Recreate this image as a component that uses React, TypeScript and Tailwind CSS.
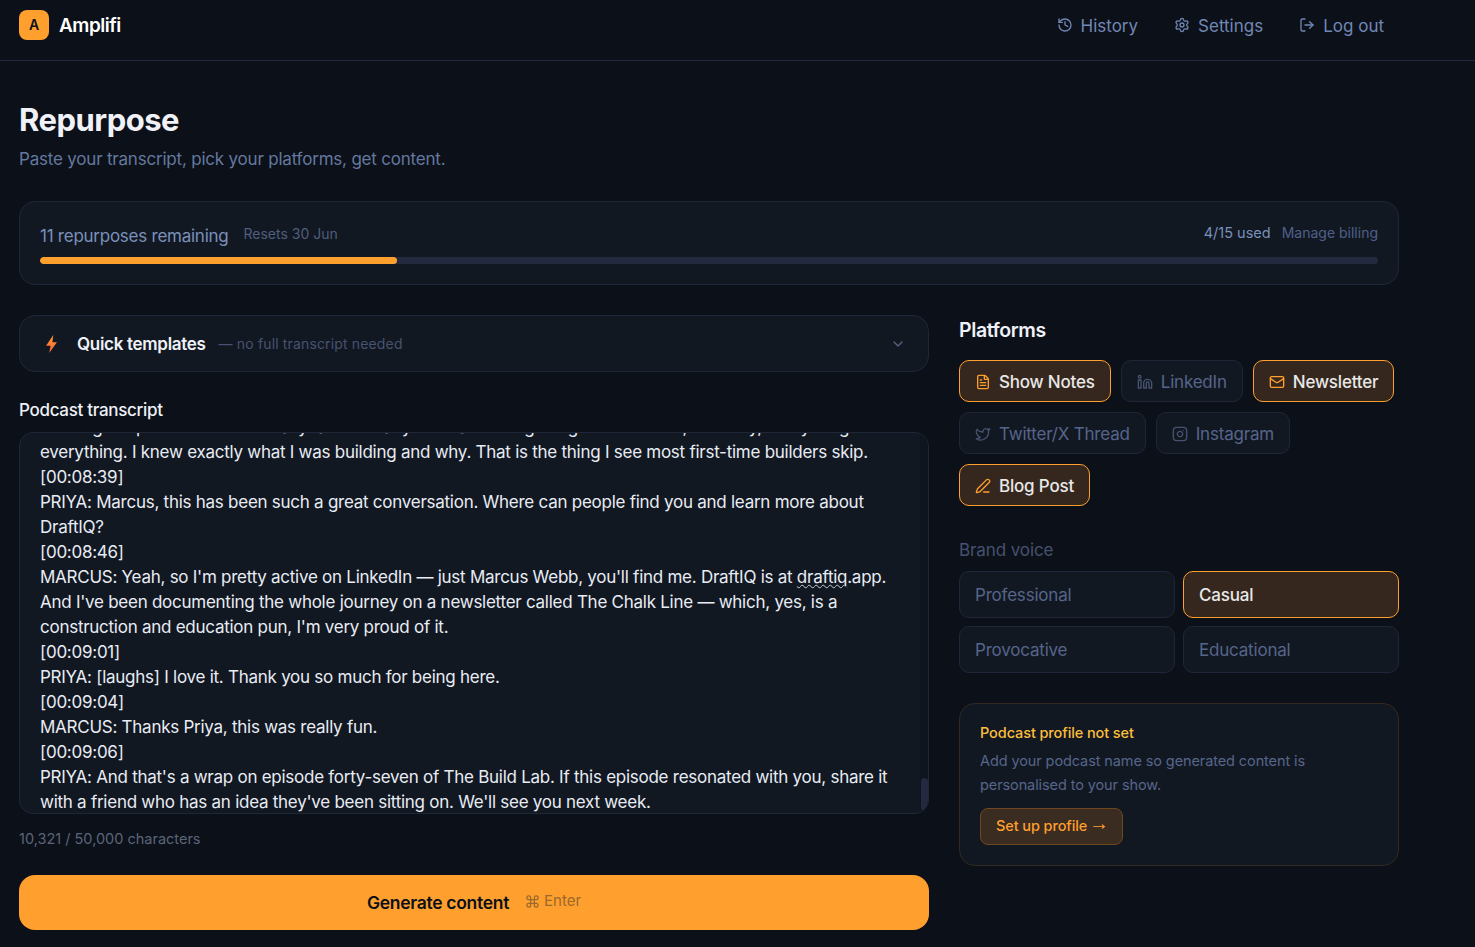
import { ChevronDown, Command, FileText, History, Instagram, Linkedin, LogOut, Mail, PenLine, Settings, Twitter } from "lucide-react";

const platforms = [
  { label: "Show Notes", icon: FileText, on: true },
  { label: "LinkedIn", icon: Linkedin, on: false },
  { label: "Newsletter", icon: Mail, on: true },
  { label: "Twitter/X Thread", icon: Twitter, on: false },
  { label: "Instagram", icon: Instagram, on: false },
  { label: "Blog Post", icon: PenLine, on: true },
];

const voices = [
  { label: "Professional", on: false },
  { label: "Casual", on: true },
  { label: "Provocative", on: false },
  { label: "Educational", on: false },
];

const App = () => {
  return (
    <div className="min-h-screen bg-[#0c1018] font-['Inter',sans-serif] text-[#e8ecf4] overflow-hidden h-[947px]">
      {/* Top bar */}
      <header className="h-[61px] border-b border-[#232a40] flex items-center justify-between pl-[19px] pr-[91px] pb-[10px]">
        <div className="flex items-center gap-[10px]">
          <div className="w-[30px] h-[30px] rounded-lg bg-[#ff9f2e] flex items-center justify-center text-[#0c1018] text-sm font-semibold">A</div>
          <span className="text-[19px] pt-[2px] font-semibold tracking-[-0.5px] text-white">Amplifi</span>
        </div>
        <nav className="flex items-center gap-9 text-[17px] text-[#7187b5] pt-[4px]">
          <a className="flex items-center gap-2"><History className="w-4 h-4 -mt-[5px]" />History</a>
          <a className="flex items-center gap-2"><Settings className="w-4 h-4 -mt-[5px]" />Settings</a>
          <a className="flex items-center gap-2"><LogOut className="w-4 h-4 -mt-[5px]" />Log out</a>
        </nav>
      </header>

      <main className="w-[1380px] ml-[19px] pt-[40px]">
        <h1 className="text-[31px] leading-[38px] font-bold tracking-[-0.5px] text-[#f0f2f8]">Repurpose</h1>
        <p className="text-[17px] leading-6 mt-[8px] tracking-[-0.2px] text-[#64789f]">Paste your transcript, pick your platforms, get content.</p>

        {/* Usage */}
        <section className="mt-[30px] h-[84px] rounded-2xl border border-[#1f2638] bg-[#121822] px-5 pt-5">
          <div className="flex items-center justify-between h-[24px]">
            <div className="flex items-center gap-[15px]">
              <span className="text-[17px] tracking-[-0.25px] text-[#7a90bb] pt-[5px]">11 repurposes remaining</span>
              <span className="text-[14px] text-[#4f5d7c] -mt-[2px]">Resets 30 Jun</span>
            </div>
            <div className="flex items-baseline gap-[11px] -mt-[2px]">
              <span className="text-[14.5px] text-[#7a90bb]">4/15 used</span>
              <span className="text-[14px] text-[#4f6088]">Manage billing</span>
            </div>
          </div>
          <div className="mt-[11px] h-[7px] rounded-full bg-[#232a40] overflow-hidden">
            <div className="h-full w-[26.7%] rounded-full bg-[#ff9f2e]" />
          </div>
        </section>

        <div className="mt-[30px] flex gap-[30px]">
          {/* Left column */}
          <div className="w-[910px]">
            <div className="h-[57px] rounded-2xl border border-[#1f2638] bg-[#121822] flex items-center pl-[26px] pr-[22px]">
              <svg viewBox="0 0 12 20" className="w-[11px] h-[18px]">
                <defs>
                  <linearGradient id="bolt" x1="0" y1="0" x2="0" y2="1">
                    <stop offset="0" stopColor="#ff9f2e" />
                    <stop offset="1" stopColor="#ff5f3a" />
                  </linearGradient>
                </defs>
                <path d="M8 0 0 12h5l-1.5 8L12 8H7z" fill="url(#bolt)" />
              </svg>
              <span className="ml-[20px] pt-[2px] text-[17px] font-semibold tracking-[-0.3px] text-[#eef1f7]">Quick templates</span>
              <span className="ml-[13px] text-[14px] tracking-[0.15px] text-[#46526f]">— no full transcript needed</span>
              <ChevronDown className="ml-auto w-4 h-4 text-[#56627f]" />
            </div>

            <label className="block mt-[28px] text-[17px] leading-5 font-medium tracking-[-0.3px] text-[#eef1f7]">Podcast transcript</label>

            <div className="relative mt-[12px] h-[382px] rounded-[14px] border border-[#1f2638] bg-[#121822] overflow-hidden flex flex-col justify-end pl-5 pr-[38px] text-[17px] leading-[25px] tracking-[-0.26px] text-[#e8ecf4]">
              <div className="-mb-[2px]">
                <p>Building the product before I really talked to anyone was the big thing I would undo, honestly, everything</p>
                <p>everything. I knew exactly what I was building and why. That is the thing I see most first-time builders skip.</p>
                <p>[00:08:39]</p>
                <p>PRIYA: Marcus, this has been such a great conversation. Where can people find you and learn more about DraftIQ?</p>
                <p>[00:08:46]</p>
                <p>MARCUS: Yeah, so I'm pretty active on LinkedIn — just Marcus Webb, you'll find me. DraftIQ is at <span className="underline decoration-wavy decoration-[#c8ccd4] decoration-1">draftiq</span>.app. And I've been documenting the whole journey on a newsletter called The Chalk Line — which, yes, is a construction and education pun, I'm very proud of it.</p>
                <p>[00:09:01]</p>
                <p>PRIYA: [laughs] I love it. Thank you so much for being here.</p>
                <p>[00:09:04]</p>
                <p>MARCUS: Thanks Priya, this was really fun.</p>
                <p>[00:09:06]</p>
                <p>PRIYA: And that's a wrap on episode forty-seven of The Build Lab. If this episode resonated with you, share it with a friend who has an idea they've been sitting on. We'll see you next week.</p>
              </div>
              <div className="absolute right-0 top-0 bottom-0 w-[8px] bg-[#0f141d]" />
              <div className="absolute right-0 bottom-[2px] w-[7px] h-[33px] rounded-full bg-[#232a40]" />
            </div>

            <p className="mt-[15px] text-[14.5px] leading-5 text-[#5b6579]">10,321 / 50,000 characters</p>

            <button className="mt-[26px] w-full h-[55px] rounded-2xl bg-[#ff9f2e] flex items-center justify-center">
              <span className="text-[17.5px] pt-[2px] font-semibold tracking-[-0.3px] text-[#0c1018]">Generate content</span>
              <span className="ml-[16px] flex items-center gap-[4px] text-[15px] text-[#9a6a2c] -mt-[3px]"><Command className="w-[15px] h-[15px]" />Enter</span>
            </button>
          </div>

          {/* Right column */}
          <aside className="w-[440px]">
            <h2 className="text-[19.5px] leading-[30px] font-semibold tracking-[-0.4px] text-[#eef1f7]">Platforms</h2>
            <div className="mt-[15px] flex flex-wrap gap-[10px]">
              {platforms.map((p) => (
                <button
                  key={p.label}
                  className={p.on
                    ? "h-[42px] px-[15px] pt-[3px] rounded-[10px] border border-[#ff9f2e] bg-[#35271d] text-[#e8e8e8] flex items-center gap-2 text-[17px] font-medium tracking-[-0.2px]"
                    : "h-[42px] px-[15px] pt-[3px] rounded-[10px] border border-[#1f2638] bg-[#121822] text-[#56658a] flex items-center gap-2 text-[17px] tracking-[-0.2px]"}
                >
                  <p.icon className={p.on ? "w-4 h-4 -mt-[2px] text-[#ff9f2e]" : "w-4 h-4 -mt-[2px] text-[#46526f]"} />
                  {p.label}
                </button>
              ))}
            </div>

            <h3 className="mt-[32px] text-[17px] leading-6 tracking-[-0.1px] text-[#46526f]">Brand voice</h3>
            <div className="mt-[9px] grid grid-cols-2 gap-2">
              {voices.map((v) => (
                <button
                  key={v.label}
                  className={v.on
                    ? "h-[47px] px-[15px] pt-[3px] text-left rounded-[10px] border border-[#ff9f2e] bg-[#35271d] text-[#e8e8e8] text-[17px] font-medium tracking-[-0.2px]"
                    : "h-[47px] px-[15px] pt-[3px] text-left rounded-[10px] border border-[#1f2638] bg-[#121822] text-[#56658a] text-[17px] tracking-[-0.2px]"}
                >
                  {v.label}
                </button>
              ))}
            </div>

            <div className="mt-[30px] h-[163px] rounded-2xl border border-[#33291f] bg-[#121822] px-5 pt-[19px]">
              <p className="text-[14.5px] leading-5 font-medium text-[#fbbf3c] tracking-[-0.1px]">Podcast profile not set</p>
              <p className="mt-[6px] text-[14.5px] leading-6 text-[#56658a] tracking-[-0.1px]">Add your podcast name so generated content is personalised to your show.</p>
              <button className="mt-[11px] h-[37px] w-[143px] pl-[15px] pb-[1px] text-left rounded-lg border border-[#70481f] bg-[#3a2c20] text-[14.5px] font-medium text-[#ff9f2e] tracking-[-0.1px]">Set up profile <span className="font-['Liberation_Sans',sans-serif] text-[20px] leading-[0] align-[1px] -ml-[2px]">→</span></button>
            </div>
          </aside>
        </div>
      </main>
    </div>
  );
};

export default App;
